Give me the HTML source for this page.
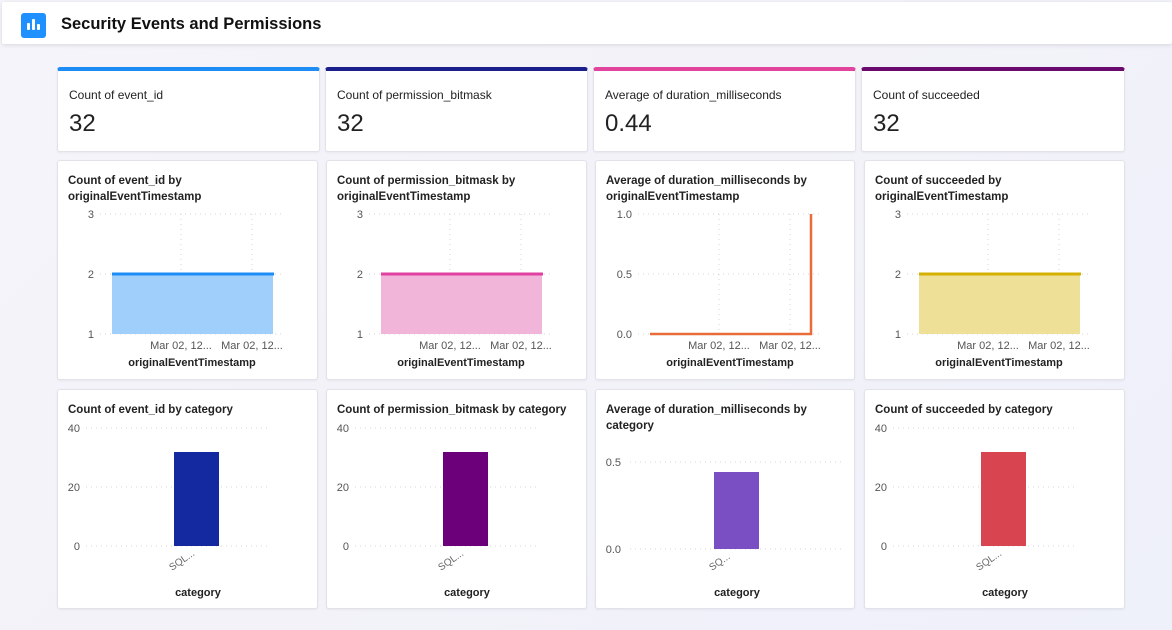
<!DOCTYPE html>
<html><head><meta charset="utf-8"><style>
*{margin:0;padding:0;box-sizing:border-box}
body{width:1172px;height:630px;overflow:hidden;font-family:"Liberation Sans",sans-serif;background:linear-gradient(135deg,#f4f4fa 0%,#f3f2f9 50%,#eef0fa 100%);position:relative}
.hdr{position:absolute;left:2px;top:2px;width:1170px;height:42px;background:#fff;box-shadow:0 1px 4px rgba(0,0,0,.12);border-radius:2px}
.ico{position:absolute;left:19px;top:11px;width:25px;height:25px;background:#1e90ff;border-radius:3px}
.ico i{position:absolute;bottom:8px;width:3px;background:#fff;border-radius:1px}
.hdr h1{position:absolute;left:59px;top:13px;font-size:16.5px;font-weight:bold;color:#111}
.card{position:absolute;background:#fff;border:1px solid #e2e2ea;border-radius:3px;box-shadow:0 1px 2px rgba(0,0,0,.05)}
.kpi{top:67px;height:85px;border-top:4px solid}
.kpi .l{position:absolute;left:11px;top:17px;font-size:12px;color:#222}
.kpi .v{position:absolute;left:11px;top:39px;font-size:24px;color:#222}
svg{position:absolute;left:0;top:0}
</style></head><body>
<div class="hdr"><div class="ico"><i style="left:6px;height:7px"></i><i style="left:11px;height:11px"></i><i style="left:16px;height:6px"></i></div><h1>Security Events and Permissions</h1></div>

<div class="card kpi" style="left:57px;width:263px;border-top-color:#1e8cf5"><div class="l">Count of event_id</div><div class="v">32</div></div>
<div class="card kpi" style="left:325px;width:263px;border-top-color:#1a1f8c"><div class="l">Count of permission_bitmask</div><div class="v">32</div></div>
<div class="card kpi" style="left:593px;width:263px;border-top-color:#e0449c"><div class="l">Average of duration_milliseconds</div><div class="v">0.44</div></div>
<div class="card kpi" style="left:861px;width:264px;border-top-color:#6b0a6e"><div class="l">Count of succeeded</div><div class="v">32</div></div>

<div class="card" style="left:57px;top:160px;width:261px;height:220px"></div>
<div class="card" style="left:326px;top:160px;width:261px;height:220px"></div>
<div class="card" style="left:595px;top:160px;width:260px;height:220px"></div>
<div class="card" style="left:864px;top:160px;width:261px;height:220px"></div>
<div class="card" style="left:57px;top:389px;width:261px;height:220px"></div>
<div class="card" style="left:326px;top:389px;width:261px;height:220px"></div>
<div class="card" style="left:595px;top:389px;width:260px;height:220px"></div>
<div class="card" style="left:864px;top:389px;width:261px;height:220px"></div>

<svg width="1172" height="630" font-family="Liberation Sans, sans-serif">
<defs>
<g id="grid1" stroke="#d6d6de" stroke-dasharray="1,4" stroke-width="1">
<line x1="0" y1="0" x2="185" y2="0"/><line x1="0" y1="60" x2="185" y2="60"/><line x1="0" y1="120" x2="185" y2="120"/>
<line x1="81" y1="0" x2="81" y2="120"/><line x1="152" y1="0" x2="152" y2="120"/>
</g>
<g id="grid2" stroke="#d6d6de" stroke-dasharray="1,4" stroke-width="1">
<line x1="0" y1="0" x2="185" y2="0"/><line x1="0" y1="59" x2="185" y2="59"/><line x1="0" y1="118" x2="185" y2="118"/>
</g>
</defs>
<g font-size="11.5" font-weight="bold" fill="#222">
<text x="68" y="184">Count of event_id by</text><text x="68" y="200">originalEventTimestamp</text>
<text x="337" y="184">Count of permission_bitmask by</text><text x="337" y="200">originalEventTimestamp</text>
<text x="606" y="184">Average of duration_milliseconds by</text><text x="606" y="200">originalEventTimestamp</text>
<text x="875" y="184">Count of succeeded by</text><text x="875" y="200">originalEventTimestamp</text>
<text x="68" y="413">Count of event_id by category</text>
<text x="337" y="413">Count of permission_bitmask by category</text>
<text x="606" y="413">Average of duration_milliseconds by</text><text x="606" y="429">category</text>
<text x="875" y="413">Count of succeeded by category</text>
</g>
<g font-size="11" fill="#555" text-anchor="end">
<text x="94" y="218">3</text><text x="94" y="278">2</text><text x="94" y="338">1</text>
<text x="363" y="218">3</text><text x="363" y="278">2</text><text x="363" y="338">1</text>
<text x="632" y="218">1.0</text><text x="632" y="278">0.5</text><text x="632" y="338">0.0</text>
<text x="901" y="218">3</text><text x="901" y="278">2</text><text x="901" y="338">1</text>
<text x="80" y="432">40</text><text x="80" y="491">20</text><text x="80" y="550">0</text>
<text x="349" y="432">40</text><text x="349" y="491">20</text><text x="349" y="550">0</text>
<text x="621" y="466">0.5</text><text x="621" y="553">0.0</text>
<text x="887" y="432">40</text><text x="887" y="491">20</text><text x="887" y="550">0</text>
</g>
<use href="#grid1" x="100" y="214"/><use href="#grid1" x="369" y="214"/><use href="#grid1" x="638" y="214"/><use href="#grid1" x="907" y="214"/>
<use href="#grid2" x="86" y="428"/><use href="#grid2" x="355" y="428"/><use href="#grid2" x="893" y="428"/>
<g stroke="#d6d6de" stroke-dasharray="1,4"><line x1="630" y1="462" x2="843" y2="462"/><line x1="630" y1="549" x2="843" y2="549"/></g>
<rect x="112" y="274" width="161" height="60" fill="#a0cffc"/><line x1="112" y1="274" x2="274" y2="274" stroke="#1e8cf5" stroke-width="3"/>
<rect x="381" y="274" width="161" height="60" fill="#f1b5da"/><line x1="381" y1="274" x2="543" y2="274" stroke="#e040a0" stroke-width="3"/>
<rect x="919" y="274" width="161" height="60" fill="#efe097"/><line x1="919" y1="274" x2="1081" y2="274" stroke="#d4b000" stroke-width="3"/>
<polyline points="650,334 811,334 811,214" fill="none" stroke="#e86c3a" stroke-width="2.5"/>
<rect x="174" y="452" width="45" height="94" fill="#1428a0"/>
<rect x="443" y="452" width="45" height="94" fill="#6b007a"/>
<rect x="714" y="472" width="45" height="77" fill="#7a4fc4"/>
<rect x="981" y="452" width="45" height="94" fill="#d84550"/>
<g font-size="11" fill="#555" text-anchor="middle">
<text x="181" y="349">Mar 02, 12...</text><text x="252" y="349">Mar 02, 12...</text>
<text x="450" y="349">Mar 02, 12...</text><text x="521" y="349">Mar 02, 12...</text>
<text x="719" y="349">Mar 02, 12...</text><text x="790" y="349">Mar 02, 12...</text>
<text x="988" y="349">Mar 02, 12...</text><text x="1059" y="349">Mar 02, 12...</text>
</g>
<g font-size="10" fill="#666">
<text transform="translate(172,571) rotate(-35)">SQL...</text>
<text transform="translate(441,571) rotate(-35)">SQL...</text>
<text transform="translate(712,571) rotate(-35)">SQ...</text>
<text transform="translate(979,571) rotate(-35)">SQL...</text>
</g>
<g font-size="11" font-weight="bold" fill="#222" text-anchor="middle">
<text x="192" y="366">originalEventTimestamp</text><text x="461" y="366">originalEventTimestamp</text>
<text x="730" y="366">originalEventTimestamp</text><text x="999" y="366">originalEventTimestamp</text>
<text x="198" y="596">category</text><text x="467" y="596">category</text>
<text x="737" y="596">category</text><text x="1005" y="596">category</text>
</g>
</svg>
</body></html>
